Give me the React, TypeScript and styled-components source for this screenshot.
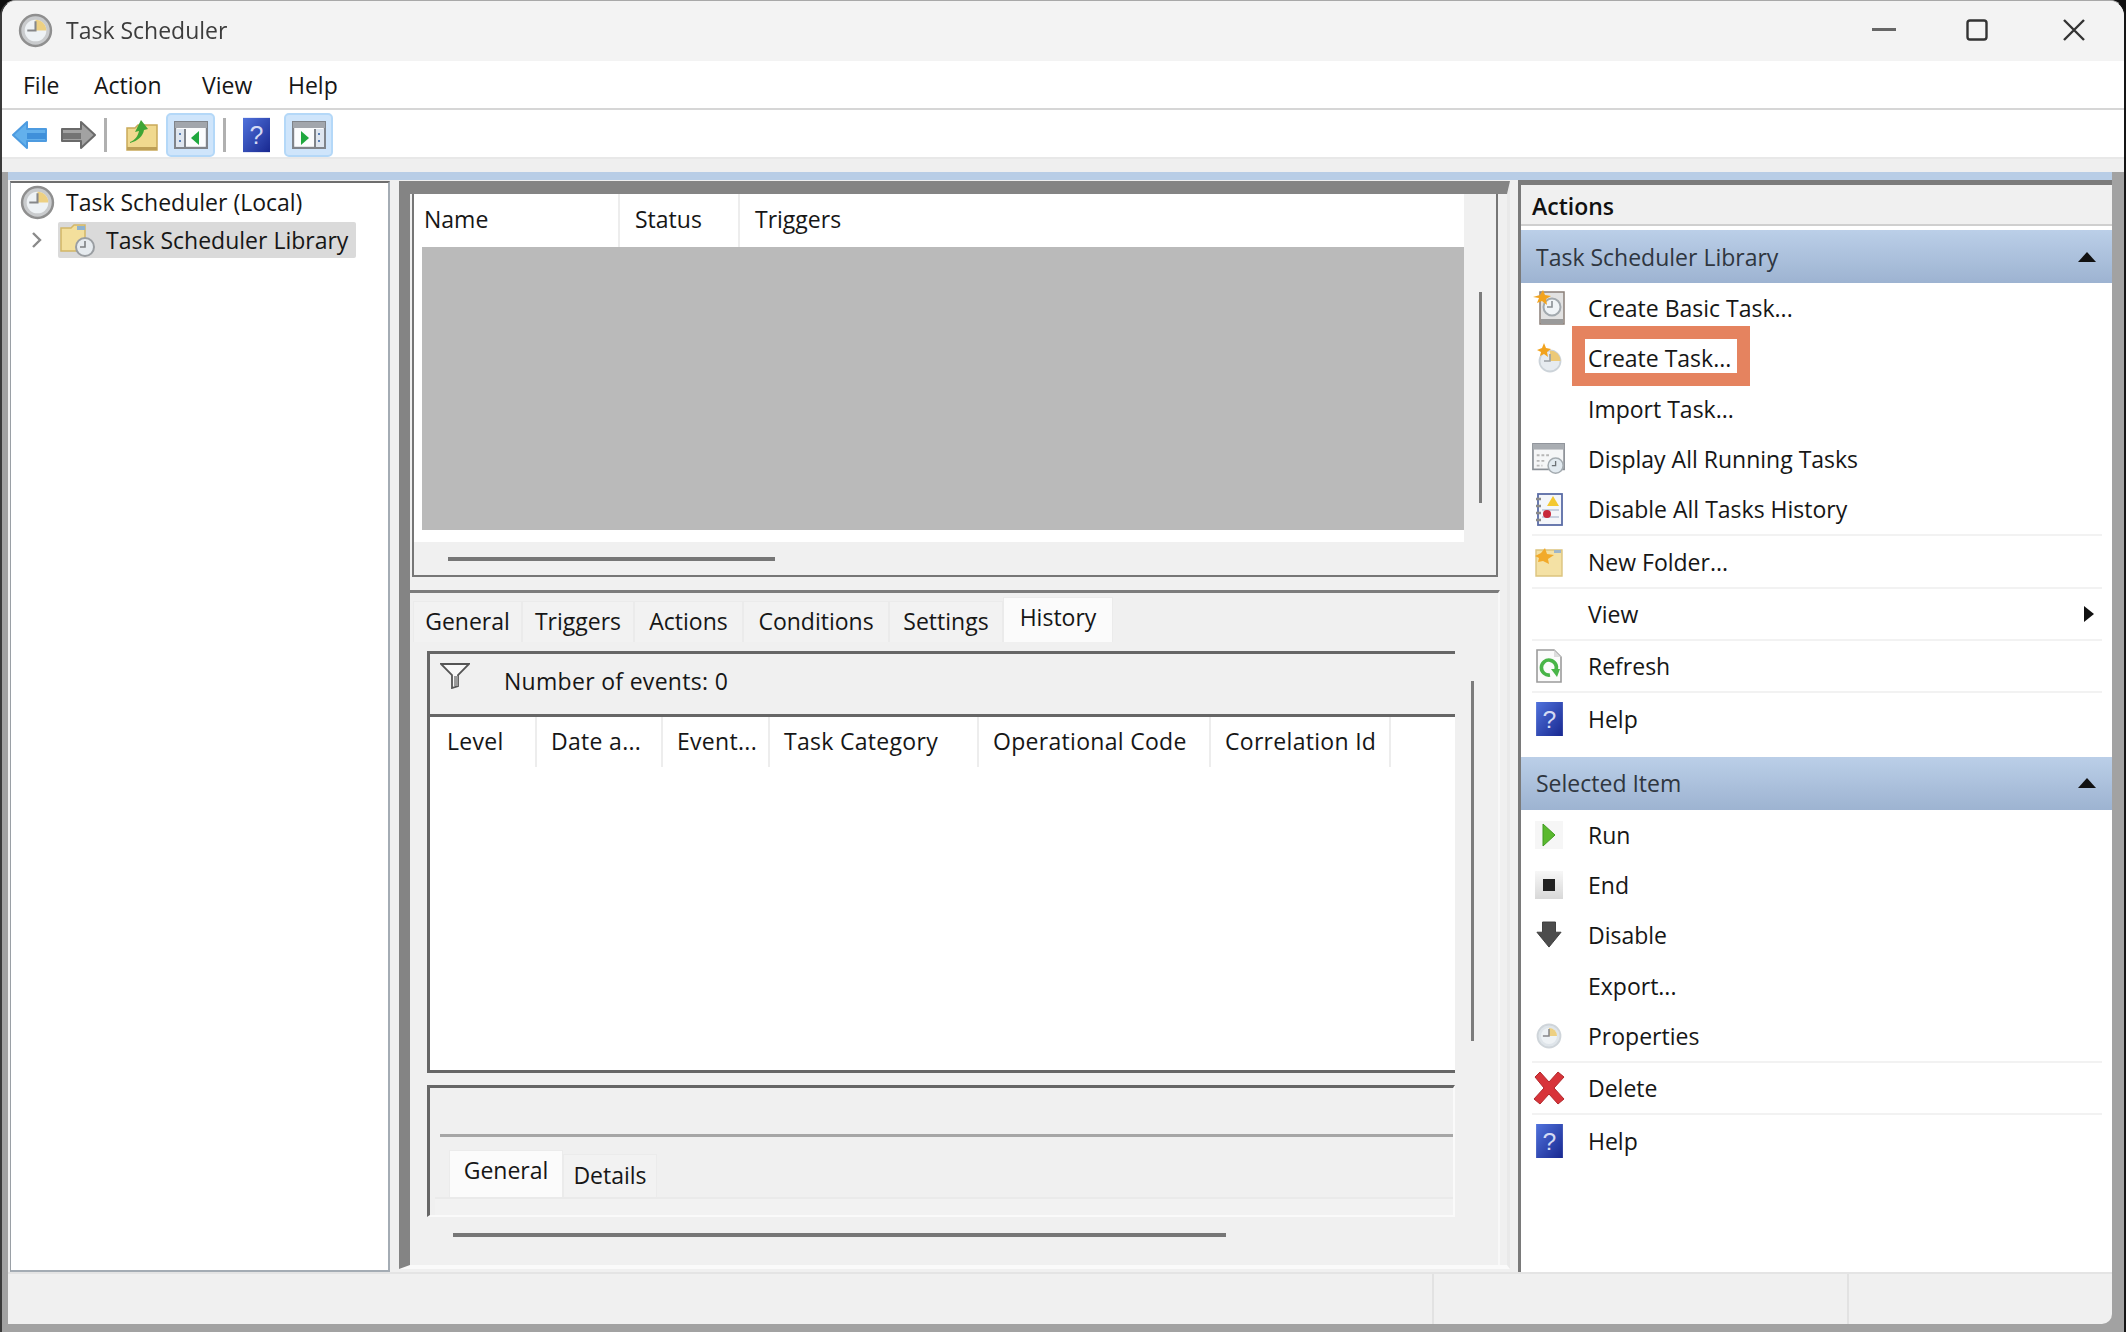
import React from 'react';

import styled, { createGlobalStyle } from 'styled-components';

const GlobalStyle = createGlobalStyle`
  html, body {
    margin: 0;
    padding: 0;
    background: #101010;
    overflow: hidden;
  }
  * {
    box-sizing: border-box;
  }
`;

const Window = styled.div`
  width: 2126px;
  height: 1332px;
  display: flex;
  flex-direction: column;
  overflow: hidden;
  background: #f0f0f0;
  border-radius: 16px 16px 0 0;
  border-left: 2px solid #3a3a3a;
  border-right: 2px solid #151515;
  border-top: 1px solid #a8a8a8;
  font-family: 'Open Sans', 'Noto Sans', sans-serif;
  font-size: 23px;
  color: #161616;
  filter: blur(0.7px);
`;
const TitleBar = styled.div`
  height: 60px;
  flex: none;
  display: flex;
  align-items: center;
  padding: 0 0 2px 16px;
  background: #f3f3f3;
`;
const TitleText = styled.span`
  margin-left: 13px;
  color: #3c3c3c;
`;
const WindowButtons = styled.div`
  margin-left: auto;
  display: flex;
  align-items: center;
  padding-right: 38px;
`;
const WindowButton = styled.div<{ $w: number }>`
  width: ${(p) => p.$w}px;
  display: flex;
  justify-content: flex-end;
`;
const MenuBar = styled.div`
  height: 49px;
  flex: none;
  display: flex;
  align-items: center;
  background: #fff;
  border-bottom: 2px solid #d6d6d6;
  padding-left: 21px;
`;
const MenuItem = styled.span<{ $w: number }>`
  width: ${(p) => p.$w}px;
`;
const ToolBar = styled.div`
  height: 47px;
  flex: none;
  display: flex;
  align-items: flex-end;
  background: #fff;
  padding-left: 10px;
`;
const ToolSlot = styled.div<{ $w: number; $active?: boolean }>`
  width: ${(p) => p.$w}px;
  height: 44px;
  display: flex;
  align-items: center;
  justify-content: center;
  border-radius: 5px;
  background: ${(p) => (p.$active ? '#cfe5fb' : 'transparent')};
  border: ${(p) => (p.$active ? '2px solid #b4d8f8' : 'none')};
`;
const ToolDivider = styled.div`
  width: 3px;
  height: 34px;
  background: #b0b0b0;
  margin: 0 8px 5px;
`;
const ToolGap = styled.div`
  height: 15px;
  flex: none;
  background: #efefef;
  border-top: 2px solid #e8e8e8;
`;
const Body = styled.div`
  flex: 1;
  min-height: 0;
  display: flex;
  flex-direction: column;
  background: #a2a2a2;
  padding: 0 12px 8px 6px;
`;
const BlueStripe = styled.div`
  height: 8px;
  flex: none;
  background: #b8cde6;
`;
const Panes = styled.div`
  flex: 1;
  min-height: 0;
  display: flex;
  background: #f0f0f0;
  padding-left: 2px;
`;
const Tree = styled.div`
  width: 380px;
  margin-top: 1px;
  flex: none;
  background: #fff;
  border-top: 2px solid #6e6e6e;
  border-left: 1px solid #9aa0a6;
  border-right: 2px solid #a4acb4;
  border-bottom: 2px solid #a4acb4;
`;
const TreeRow = styled.div`
  height: 38px;
  display: flex;
  align-items: center;
`;
const TreeRootIcon = styled.div`
  margin-left: 9px;
  margin-right: 11px;
  display: flex;
`;
const TreeChevron = styled.div`
  width: 47px;
  display: flex;
  justify-content: flex-end;
  padding-right: 15px;
`;
const TreeSelected = styled.div`
  width: 298px;
  height: 36px;
  display: flex;
  align-items: center;
  gap: 10px;
  padding-left: 2px;
  background: #dadada;
  border-radius: 2px;
  white-space: nowrap;
`;
const PaneGap = styled.div<{ $w: number }>`
  width: ${(p) => p.$w}px;
  flex: none;
`;
const CenterFrame = styled.div`
  width: 1111px;
  height: 1088px;
  flex: none;
  margin-top: 1px;
  border-style: solid;
  border-width: 13px 3px 4px 11px;
  border-color: #848484 #e9e9e9 #fafafa #848484;
  display: flex;
  flex-direction: column;
`;
const TopPane = styled.div`
  width: 1086px;
  height: 383px;
  flex: none;
  margin-left: 2px;
  border: 2px solid #767676;
  border-top: none;
  display: flex;
  flex-direction: column;
  background: #f0f0f0;
`;
const TopBody = styled.div`
  height: 348px;
  flex: none;
  display: flex;
`;
const ListArea = styled.div`
  width: 1050px;
  flex: none;
  background: #fff;
`;
const HeaderRow = styled.div<{ $h: number }>`
  height: ${(p) => p.$h}px;
  display: flex;
  align-items: stretch;
  background: #fff;
`;
const HeaderCell = styled.div<{ $w: number; $pad: number; $plain?: boolean }>`
  width: ${(p) => p.$w}px;
  padding: 0 0 3px ${(p) => p.$pad}px;
  flex: none;
  display: flex;
  align-items: center;
  border-right: ${(p) => (p.$plain ? 'none' : '2px solid #ededed')};
  white-space: nowrap;
`;
const EventColumn = styled(HeaderCell)`
  letter-spacing: 0.3px;
`;
const EmptyArea = styled.div`
  height: 283px;
  margin: 0 0 0 8px;
  background: #bababa;
`;
const VTrack = styled.div<{ $top: number; $h: number; $right?: number }>`
  flex: 1;
  display: flex;
  justify-content: center;
  padding-top: ${(p) => p.$top}px;
  padding-right: ${(p) => p.$right ?? 0}px;

  &::before {
    content: '';
    width: 3px;
    height: ${(p) => p.$h}px;
    background: #7c7c7c;
  }
`;
const HTrack = styled.div<{ $left: number; $w: number; $h: number }>`
  height: ${(p) => p.$h}px;
  flex: none;
  display: flex;
  align-items: center;
  padding-left: ${(p) => p.$left}px;

  &::before {
    content: '';
    width: ${(p) => p.$w}px;
    height: 4px;
    background: #767676;
  }
`;
const BottomPane = styled.div`
  width: 1090px;
  flex: 1;
  min-height: 0;
  margin-top: 13px;
  border-top: 3px solid #7c7c7c;
  border-right: 2px solid #f8f8f8;
  display: flex;
  flex-direction: column;
`;
const TabStrip = styled.div<{ $pad: number; $h: number }>`
  height: ${(p) => p.$h}px;
  flex: none;
  display: flex;
  align-items: flex-end;
  padding-left: ${(p) => p.$pad}px;
`;
const Tab = styled.div<{ $w: number; $active?: boolean; $h: number }>`
  width: ${(p) => p.$w}px;
  height: ${(p) => p.$h + (p.$active ? 4 : 0)}px;
  flex: none;
  display: flex;
  align-items: ${(p) => (p.$active ? 'flex-start' : 'center')};
  padding-top: ${(p) => (p.$active ? '3px' : '0')};
  padding-bottom: ${(p) => (p.$active ? '0' : '2px')};
  justify-content: center;
  background: ${(p) => (p.$active ? '#fbfbfb' : '#f2f2f2')};
  border: 1px solid #ebebeb;
  border-bottom: none;
`;
const TabPanel = styled.div`
  flex: 1;
  min-height: 0;
  padding-top: 9px;
  display: flex;
  flex-direction: column;
`;
const PanelRow = styled.div`
  height: 566px;
  flex: none;
  display: flex;
  padding-left: 17px;
`;
const PanelBox = styled.div`
  width: 1028px;
  flex: none;
  display: flex;
  flex-direction: column;
`;
const EventsList = styled.div`
  height: 422px;
  flex: none;
  background: #fff;
  border-top: 3px solid #666;
  border-left: 3px solid #666;
  border-bottom: 3px solid #666;
`;
const EventsHeader = styled.div`
  height: 63px;
  display: flex;
  align-items: flex-start;
  gap: 34px;
  padding: 9px 0 0 10px;
  background: #f0f0f0;
  border-bottom: 3px solid #666;
`;
const EventsCount = styled.span`
  margin-top: 2px;
  letter-spacing: 0.3px;
`;
const DetailBox = styled.div`
  flex: 1;
  margin-top: 12px;
  border-top: 3px solid #666;
  border-left: 3px solid #666;
  border-right: 2px solid #fafafa;
  border-bottom: 2px solid #fafafa;
  display: flex;
  flex-direction: column;
`;
const DetailRule = styled.div`
  height: 3px;
  flex: none;
  margin: 46px 0 13px 10px;
  background: #a6a6a6;
`;
const DetailContent = styled.div`
  flex: 1;
  margin-left: 5px;
  background: #f2f2f2;
  border-top: 2px solid #eaeaea;
`;
const PaneEnd = styled.div`
  width: 1090px;
  flex: none;
`;
const ActionsPane = styled.div`
  width: 594px;
  flex: none;
  background: #fff;
  border-left: 3px solid #7a7a7a;
  border-top: 5px solid #7c7c7c;
  display: flex;
  flex-direction: column;
`;
const ActionsTitle = styled.div`
  height: 41px;
  flex: none;
  display: flex;
  align-items: center;
  padding: 2px 0 0 11px;
  font-weight: 600;
  color: #111;
  background: #f0f0f0;
  border-bottom: 2px solid #cfcfcf;
`;
const SectionHeader = styled.div<{ $mt: number }>`
  height: 53px;
  flex: none;
  margin-top: ${(p) => p.$mt}px;
  display: flex;
  align-items: center;
  justify-content: space-between;
  padding: 0 16px 0 15px;
  color: #2f3640;
  background: linear-gradient(#bbcfe8, #9db3d1);
`;
const Caret = styled.span`
  width: 0;
  height: 0;
  border-left: 9px solid transparent;
  border-right: 9px solid transparent;
  border-bottom: 10px solid #111;
`;
const ActionRow = styled.div<{ $sep?: boolean }>`
  height: ${(p) => (p.$sep ? 52.3 : 50.3)}px;
  flex: none;
  margin: 0 10px 0 11px;
  display: flex;
  align-items: center;
  border-bottom: ${(p) => (p.$sep ? '2px solid #f2f2f2' : 'none')};
`;
const ActionIcon = styled.div`
  width: 34px;
  margin-right: 22px;
  flex: none;
  display: flex;
  justify-content: center;
`;
const ActionLabel = styled.span<{ $marked?: boolean }>`
  padding: ${(p) => (p.$marked ? '5px 6px 0 3px' : '0')};
  margin: ${(p) => (p.$marked ? '-4px 0 0 -3px' : '0')};
  line-height: ${(p) => (p.$marked ? 29 : 34)}px;
  box-shadow: ${(p) => (p.$marked ? '0 0 0 13px #e5835f' : 'none')};
`;
const SubmenuArrow = styled.span`
  margin-left: auto;
  margin-right: 8px;
  width: 0;
  height: 0;
  border-top: 8px solid transparent;
  border-bottom: 8px solid transparent;
  border-left: 10px solid #111;
`;
const StatusBar = styled.div`
  height: 52px;
  flex: none;
  display: flex;
  background: #f0f0f0;
  border-top: 2px solid #e4e4e4;
  border-radius: 0 0 10px 0;
`;
const StatusCell = styled.div<{ $w: number }>`
  width: ${(p) => p.$w}px;
  border-right: 2px solid #e2e2e2;
`;

const Clock = ({ size = 35, faded = false }: { size?: number; faded?: boolean }) => (
  <svg width={size} height={size} viewBox="0 0 34 34">
    <circle cx="17" cy="17" r="15" fill={faded ? '#dfe5ea' : '#c9cbcd'} stroke={faded ? '#cfd5da' : '#8f8f8f'} strokeWidth="2.4" />
    <circle cx="17" cy="17" r="10.5" fill="#eef2f5" />
    <path d="M17 17V6.5A10.5 10.5 0 0 1 27.5 17Z" fill="#edd083" />
    <path d="M17 8v9H9" fill="none" stroke="#86878a" strokeWidth="2" />
  </svg>
);
const BackArrow = () => (
  <svg width="36" height="30" viewBox="0 0 36 30">
    <path d="M1 15 15 2v7h19v12H15v7Z" fill="#63b0ec" stroke="#4d9be0" strokeWidth="2" strokeLinejoin="round" />
    <path d="M15 13h19v6H15Z" fill="#3f90da" />
  </svg>
);
const ForwardArrow = () => (
  <svg width="36" height="30" viewBox="0 0 36 30">
    <path d="M35 15 21 2v7H2v12h19v7Z" fill="#a2a2a2" stroke="#6a6a6a" strokeWidth="2" strokeLinejoin="round" />
    <path d="M3 13h18v6H3Z" fill="#747474" />
  </svg>
);
const UpFolder = () => (
  <svg width="32" height="32" viewBox="0 0 32 32">
    <path d="M1 9h8l3-3h19v25H1Z" fill="#f0d98f" stroke="#c9a95a" strokeWidth="1.5" />
    <path d="M1 28h30v3H1Z" fill="#bd9f56" />
    <path d="M4 23c5-2 8-6 9-11l-4 1 6-12 7 9-4 1c-1 6-6 11-14 13Z" fill="#3fa535" />
  </svg>
);
const PaneToggle = ({ side }: { side: 'left' | 'right' }) => {
  const panelX = side === 'left' ? 2 : 23;
  const lineX = side === 'left' ? 11 : 23;
  return (
    <svg width="34" height="28" viewBox="0 0 34 28">
      <rect x="1" y="1" width="32" height="26" fill="#fbfcfd" stroke="#80848a" strokeWidth="2.4" />
      <rect x="1" y="1" width="32" height="6" fill="#a2a6ac" />
      <rect x={panelX} y="8" width="9" height="18" fill="#dfe6ef" />
      <path d={`M${lineX} 8v18`} stroke="#80848a" strokeWidth="2" />
      <path d={`M${panelX + 4} 12v2M${panelX + 4} 19v2`} stroke="#5a7fb5" strokeWidth="2" />
      {side === 'left' ? <path d="M25 10v14l-8-7Z" fill="#1fa83f" /> : <path d="M9 10v14l8-7Z" fill="#1fa83f" />}
    </svg>
  );
};
const HelpBook = ({ w = 27, h = 34 }: { w?: number; h?: number }) => (
  <svg width={w} height={h} viewBox="0 0 26 33">
    <defs>
      <linearGradient id="helpFill" x1="0" y1="0" x2="1" y2="1">
        <stop offset="0" stopColor="#5072dc" />
        <stop offset="1" stopColor="#182890" />
      </linearGradient>
    </defs>
    <rect width="26" height="33" fill="url(#helpFill)" />
    <text x="13" y="25" textAnchor="middle" fontSize="24" fontFamily="Liberation Sans, sans-serif" fill="#d4daf4">
      ?
    </text>
  </svg>
);
const FolderClock = () => (
  <svg width="36" height="34" viewBox="0 0 36 34">
    <path d="M1 5h10l3-3h11v26H1Z" fill="#f3df9c" stroke="#d2b767" strokeWidth="1.5" />
    <rect x="17" y="3" width="8" height="4" fill="#8fb2cf" />
    <circle cx="25" cy="24" r="9" fill="#e6ebef" stroke="#9a9ea2" strokeWidth="2" />
    <path d="M25 18v6h-5" fill="none" stroke="#7d8083" strokeWidth="1.6" />
  </svg>
);
const BasicTaskIcon = () => (
  <svg width="32" height="36" viewBox="0 0 32 36">
    <rect x="7" y="2" width="24" height="32" fill="#e2e2e2" stroke="#8a7f78" strokeWidth="1.5" />
    <rect x="8" y="29" width="22" height="5" fill="#9a9a9a" />
    <circle cx="19" cy="17" r="8.5" fill="#f0f4f7" stroke="#a2a9ae" strokeWidth="2" />
    <path d="M19 11v6h-5" fill="none" stroke="#8a9094" strokeWidth="1.6" />
    <path d="M0 7 7 5 10 0l2 5 6 1-5 3 1 6-5-4-5 2 2-5Z" fill="#f2a31e" />
  </svg>
);
const CreateTaskIcon = () => (
  <svg width="26" height="30" viewBox="0 0 26 30">
    <circle cx="14" cy="18" r="10.5" fill="#e6ebf0" stroke="#ccd3d9" strokeWidth="1.8" />
    <path d="M14 18V7.5A10.5 10.5 0 0 1 24.5 18Z" fill="#ecc977" />
    <path d="M14 11v7H8" fill="none" stroke="#9aa0a4" strokeWidth="1.6" />
    <path d="M1 7 6 5 8 0l2 5 5 1-4 3 1 5-4-3-4 2 1-4Z" fill="#f2a31e" />
  </svg>
);
const RunningIcon = () => (
  <svg width="36" height="34" viewBox="0 0 36 34">
    <rect x="1" y="1" width="33" height="27" fill="#f5f6f7" stroke="#8b9096" strokeWidth="1.8" />
    <rect x="1" y="1" width="33" height="6" fill="#a9adb2" />
    <path d="M5 13h14M5 19h9M5 24h6" stroke="#b7b7b7" strokeWidth="2" strokeDasharray="3 2" />
    <circle cx="25" cy="24" r="8" fill="#e2eaf0" stroke="#a4abb0" strokeWidth="1.6" />
    <path d="M25 19v5h-4" fill="none" stroke="#6d7276" strokeWidth="1.4" />
  </svg>
);
const HistoryIcon = () => (
  <svg width="30" height="33" viewBox="0 0 30 33">
    <rect x="4" y="1" width="24" height="31" fill="#f4f6fa" stroke="#5a6ca6" strokeWidth="1.8" />
    <path d="M2 6h5M2 13h5M2 20h5M2 27h5" stroke="#8a8a8a" strokeWidth="2.4" />
    <path d="M19 3 25 13H13Z" fill="#f3c832" />
    <path d="M8 17h17M8 24h17" stroke="#b9c4d6" strokeWidth="1.5" />
    <circle cx="13" cy="21" r="4" fill="#c8283a" />
  </svg>
);
const NewFolderIcon = () => (
  <svg width="30" height="30" viewBox="0 0 30 30">
    <path d="M2 3h26v26H2Z" fill="#f4e1a4" stroke="#dcc47e" strokeWidth="1.4" />
    <rect x="20" y="3" width="7" height="3" fill="#9fb6c9" />
    <path d="M1 9l6-3 4-5 2 6 7 1-6 4 1 5-6-3-5 1 1-4Z" fill="#f2aa2a" />
  </svg>
);
const RefreshIcon = () => (
  <svg width="26" height="34" viewBox="0 0 26 34">
    <path d="M1 1h17l7 7v25H1Z" fill="#fbfbfb" stroke="#9c9c9c" strokeWidth="1.6" />
    <path d="M18 8V1l7 7Z" fill="#dedede" />
    <path d="M14 26a7.5 7.5 0 1 1 6-5" fill="none" stroke="#49b548" strokeWidth="3.6" />
    <path d="M15 20h9l-3 8Z" fill="#49b548" />
  </svg>
);
const RunIcon = () => (
  <svg width="28" height="28" viewBox="0 0 28 28">
    <rect width="28" height="28" fill="#f6f6f6" />
    <path d="M8 3 20 14 8 25Z" fill="#5ab92e" stroke="#3f9c20" strokeWidth="1" />
  </svg>
);
const EndIcon = () => (
  <svg width="28" height="28" viewBox="0 0 28 28">
    <defs>
      <linearGradient id="endFill" x1="0" y1="0" x2="0" y2="1">
        <stop offset="0" stopColor="#f7f7f7" />
        <stop offset="1" stopColor="#d8d8d8" />
      </linearGradient>
    </defs>
    <rect width="28" height="28" fill="url(#endFill)" />
    <rect x="8" y="8" width="12" height="12" fill="#222" />
  </svg>
);
const DisableIcon = () => (
  <svg width="26" height="28" viewBox="0 0 28 30">
    <path d="M7 1h14v11h6L14 28 1 12h6Z" fill="#4c4c4c" stroke="#3a3a3a" strokeWidth="1" />
  </svg>
);
const DeleteIcon = () => (
  <svg width="34" height="34" viewBox="0 0 34 34">
    <path d="M3 6 8 1 17 11 26 1 32 6 22 17 32 28 26 33 17 23 8 33 2 28 12 17Z" fill="#d8343a" stroke="#b2282c" strokeWidth="1" />
  </svg>
);
const FilterIcon = () => (
  <svg width="30" height="26" viewBox="0 0 30 26">
    <path d="M1 1h28L18 12v11l-6 2V12Z" fill="#f8f8f8" stroke="#555" strokeWidth="1.8" />
    <path d="M14 13h4v10h-4Z" fill="#9a9a9a" />
  </svg>
);
const Chevron = () => (
  <svg width="12" height="18" viewBox="0 0 12 18">
    <path d="M2 2l7 7-7 7" fill="none" stroke="#8a8a8a" strokeWidth="2.4" />
  </svg>
);

const libraryActions = [
  { label: 'Create Basic Task...', icon: <BasicTaskIcon /> },
  { label: 'Create Task...', icon: <CreateTaskIcon />, marked: true },
  { label: 'Import Task...' },
  { label: 'Display All Running Tasks', icon: <RunningIcon /> },
  { label: 'Disable All Tasks History', icon: <HistoryIcon />, sep: true },
  { label: 'New Folder...', icon: <NewFolderIcon />, sep: true },
  { label: 'View', sep: true, submenu: true },
  { label: 'Refresh', icon: <RefreshIcon />, sep: true },
  { label: 'Help', icon: <HelpBook /> },
];
const itemActions = [
  { label: 'Run', icon: <RunIcon /> },
  { label: 'End', icon: <EndIcon /> },
  { label: 'Disable', icon: <DisableIcon /> },
  { label: 'Export...' },
  { label: 'Properties', icon: <Clock size={26} faded />, sep: true },
  { label: 'Delete', icon: <DeleteIcon />, sep: true },
  { label: 'Help', icon: <HelpBook /> },
];
const historyTabs = [
  { label: 'General', w: 109 },
  { label: 'Triggers', w: 112 },
  { label: 'Actions', w: 109 },
  { label: 'Conditions', w: 146 },
  { label: 'Settings', w: 114 },
  { label: 'History', w: 110, active: true },
];
const eventColumns = [
  { label: 'Level', w: 107, pad: 17 },
  { label: 'Date a...', w: 126, pad: 14 },
  { label: 'Event...', w: 107, pad: 14 },
  { label: 'Task Category', w: 209, pad: 14 },
  { label: 'Operational Code', w: 232, pad: 14 },
  { label: 'Correlation Id', w: 180, pad: 14 },
];

type Action = {
  label: string;
  icon?: React.ReactNode;
  sep?: boolean;
  marked?: boolean;
  submenu?: boolean;
};

const ActionItems = ({ items }: { items: Action[] }) => (
  <>
    {items.map((item) => (
      <ActionRow key={item.label} $sep={item.sep}>
        <ActionIcon>{item.icon}</ActionIcon>
        <ActionLabel $marked={item.marked}>{item.label}</ActionLabel>
        {item.submenu && <SubmenuArrow />}
      </ActionRow>
    ))}
  </>
);

const App = () => {
  return (
    <>
      <GlobalStyle />
      <Window>
        <TitleBar>
          <Clock />
          <TitleText>Task Scheduler</TitleText>
          <WindowButtons>
            <WindowButton $w={24}>
              <svg width="24" height="4" viewBox="0 0 24 4">
                <rect width="24" height="3" fill="#666" />
              </svg>
            </WindowButton>
            <WindowButton $w={92}>
              <svg width="22" height="22" viewBox="0 0 22 22">
                <rect x="1.5" y="1.5" width="19" height="19" rx="2.5" fill="none" stroke="#333" strokeWidth="2.4" />
              </svg>
            </WindowButton>
            <WindowButton $w={98}>
              <svg width="24" height="24" viewBox="0 0 24 24">
                <path d="M2 2l20 20M22 2 2 22" stroke="#333" strokeWidth="2.4" />
              </svg>
            </WindowButton>
          </WindowButtons>
        </TitleBar>
        <MenuBar>
          <MenuItem $w={71}>File</MenuItem>
          <MenuItem $w={108}>Action</MenuItem>
          <MenuItem $w={86}>View</MenuItem>
          <MenuItem $w={60}>Help</MenuItem>
        </MenuBar>
        <ToolBar>
          <ToolSlot $w={36}>
            <BackArrow />
          </ToolSlot>
          <PaneGap $w={12} />
          <ToolSlot $w={36}>
            <ForwardArrow />
          </ToolSlot>
          <ToolDivider />
          <PaneGap $w={10} />
          <ToolSlot $w={34}>
            <UpFolder />
          </ToolSlot>
          <PaneGap $w={7} />
          <ToolSlot $w={49} $active>
            <PaneToggle side="left" />
          </ToolSlot>
          <ToolDivider />
          <PaneGap $w={8} />
          <ToolSlot $w={28}>
            <HelpBook h={36} />
          </ToolSlot>
          <PaneGap $w={14} />
          <ToolSlot $w={49} $active>
            <PaneToggle side="right" />
          </ToolSlot>
        </ToolBar>
        <ToolGap />
        <Body>
          <BlueStripe />
          <Panes>
            <Tree>
              <TreeRow>
                <TreeRootIcon>
                  <Clock />
                </TreeRootIcon>
                Task Scheduler (Local)
              </TreeRow>
              <TreeRow>
                <TreeChevron>
                  <Chevron />
                </TreeChevron>
                <TreeSelected>
                  <FolderClock />
                  Task Scheduler Library
                </TreeSelected>
              </TreeRow>
            </Tree>
            <PaneGap $w={9} />
            <CenterFrame>
              <TopPane>
                <TopBody>
                  <ListArea>
                    <HeaderRow $h={53}>
                      <HeaderCell $w={206} $pad={10}>
                        Name
                      </HeaderCell>
                      <HeaderCell $w={120} $pad={15}>
                        Status
                      </HeaderCell>
                      <HeaderCell $w={300} $pad={15} $plain>
                        Triggers
                      </HeaderCell>
                    </HeaderRow>
                    <EmptyArea />
                  </ListArea>
                  <VTrack $top={98} $h={211} />
                </TopBody>
                <HTrack $left={34} $w={327} $h={33} />
              </TopPane>
              <BottomPane>
                <TabStrip $pad={3} $h={49}>
                  {historyTabs.map((tab) => (
                    <Tab key={tab.label} $w={tab.w} $h={41} $active={tab.active}>
                      {tab.label}
                    </Tab>
                  ))}
                </TabStrip>
                <TabPanel>
                  <PanelRow>
                    <PanelBox>
                      <EventsList>
                        <EventsHeader>
                          <FilterIcon />
                          <EventsCount>Number of events: 0</EventsCount>
                        </EventsHeader>
                        <HeaderRow $h={50}>
                          {eventColumns.map((col) => (
                            <EventColumn key={col.label} $w={col.w} $pad={col.pad}>
                              {col.label}
                            </EventColumn>
                          ))}
                        </HeaderRow>
                      </EventsList>
                      <DetailBox>
                        <DetailRule />
                        <TabStrip $pad={19} $h={47}>
                          <Tab $w={114} $h={43} $active>
                            General
                          </Tab>
                          <Tab $w={94} $h={43}>
                            Details
                          </Tab>
                        </TabStrip>
                        <DetailContent />
                      </DetailBox>
                    </PanelBox>
                    <VTrack $top={30} $h={360} $right={8} />
                  </PanelRow>
                  <PaneEnd>
                    <HTrack $left={43} $w={773} $h={36} />
                  </PaneEnd>
                </TabPanel>
              </BottomPane>
            </CenterFrame>
            <PaneGap $w={8} />
            <ActionsPane>
              <ActionsTitle>Actions</ActionsTitle>
              <SectionHeader $mt={4}>
                Task Scheduler Library
                <Caret />
              </SectionHeader>
              <ActionItems items={libraryActions} />
              <SectionHeader $mt={13}>
                Selected Item
                <Caret />
              </SectionHeader>
              <ActionItems items={itemActions} />
            </ActionsPane>
          </Panes>
          <StatusBar>
            <StatusCell $w={1426} />
            <StatusCell $w={415} />
          </StatusBar>
        </Body>
      </Window>
    </>
  );
};

export default App;
